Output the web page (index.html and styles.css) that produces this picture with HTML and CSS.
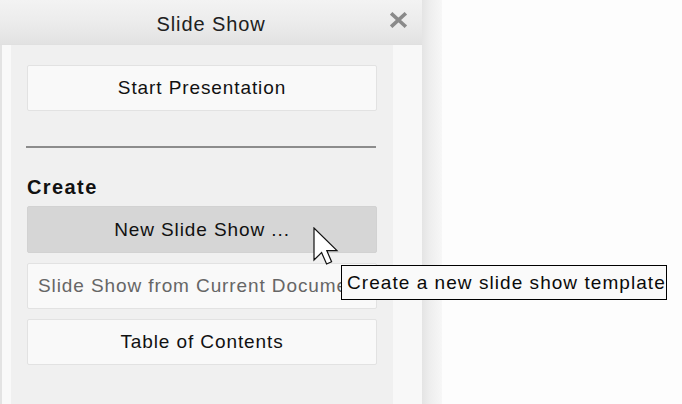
FILE: index.html
```html
<!DOCTYPE html>
<html>
<head>
<meta charset="utf-8">
<link rel="stylesheet" href="styles.css">
</head>
<body>
<div class="app">
  <aside class="panel">
    <header class="panel-header">
      <span class="title">Slide Show</span>
      <span class="close" aria-label="Close">
        <svg width="17" height="16" viewBox="0 0 17 16"><path d="M2.5 2.5 L14.5 13.5 M14.5 2.5 L2.5 13.5" stroke="#8a8a8a" stroke-width="3.6" stroke-linecap="square"/></svg>
      </span>
    </header>
    <div class="panel-body">
      <div class="gutter"></div>
      <div class="content">
        <button class="btn">Start Presentation</button>
        <hr class="sep">
        <div class="label">Create</div>
        <div class="btn-list">
          <button class="btn btn-hover">New Slide Show ...</button>
          <button class="btn btn-muted"><span class="clip">Slide Show from Current Document</span></button>
          <button class="btn">Table of Contents</button>
        </div>
      </div>
      <div class="track"></div>
    </div>
  </aside>
  <div class="shadow"></div>
  <div class="desk"></div>
  <svg class="cursor" width="26" height="38" viewBox="0 0 13 19"><path d="M0.5 0.5 L0.5 16.5 L4.3 12.8 L6.8 18.5 L9.3 17.4 L6.9 11.8 L12 11.8 Z" fill="#fff" stroke="#111" stroke-width="0.6" stroke-linejoin="miter"/></svg>
  <div class="tooltip">Create a new slide show template</div>
</div>
</body>
</html>
```

FILE: styles.css
```css
* { box-sizing: border-box; }
html, body { margin: 0; padding: 0; }
body {
  width: 682px;
  height: 404px;
  overflow: hidden;
  background: #fdfdfd;
  font-family: "Liberation Sans", Arial, sans-serif;
}
.app {
  position: relative;
  display: flex;
  width: 682px;
  height: 404px;
}
.panel {
  width: 422px;
  height: 404px;
  display: flex;
  flex-direction: column;
  background: #f0f0f0;
}
.panel-header {
  height: 45px;
  flex: none;
  display: grid;
  grid-template-columns: 1fr auto 1fr;
  align-items: center;
  background: linear-gradient(#f3f3f3 0%, #ececec 50%, #e2e2e2 100%);
  border-bottom: 1px solid #e0e0e0;
}
.title {
  grid-column: 2;
  font-size: 20px;
  letter-spacing: 0.9px;
  color: #202020;
  padding-top: 5px;
}
.close {
  grid-column: 3;
  justify-self: end;
  margin-right: 15px;
  margin-bottom: 5px;
  display: flex;
}
.panel-body {
  flex: 1;
  display: flex;
  border-left: 2px solid #e3e3e3;
}
.gutter {
  width: 9px;
  background: #f9f9f9;
}
.content {
  flex: 1;
  background: #f0f0f0;
  padding: 20px 16px 0 16px;
}
.track {
  width: 29px;
  background: #f8f8f8;
}
.btn {
  display: flex;
  align-items: center;
  justify-content: center;
  width: 100%;
  height: 46px;
  margin: 0;
  padding: 0 10px;
  background: #f9f9f9;
  border: 1px solid #e2e2e2;
  border-radius: 2px;
  font-family: "Liberation Sans", Arial, sans-serif;
  font-size: 19px;
  letter-spacing: 0.9px;
  color: #111;
}
.btn-hover {
  background: #d6d6d6;
  border-color: #d2d2d2;
  height: 47px;
}
.btn-muted {
  justify-content: flex-start;
  color: #666;
  overflow: hidden;
}
.clip {
  white-space: nowrap;
}
.sep {
  margin: 35px 1px 0 -1px;
  height: 2px;
  border: none;
  background: #8c8c8c;
}
.label {
  margin-top: 27px;
  line-height: 24px;
  height: 24px;
  font-size: 20px;
  font-weight: bold;
  letter-spacing: 1.4px;
  color: #111;
}
.btn-list {
  margin-top: 7px;
  display: flex;
  flex-direction: column;
  gap: 10px;
}
.shadow {
  width: 20px;
  height: 404px;
  background: linear-gradient(90deg, #e4e4e4, #eeeeee 40%, #f7f7f7 100%);
}
.desk {
  flex: 1;
  background: #fdfdfd;
}
.cursor {
  position: absolute;
  left: 313px;
  top: 227px;
}
.tooltip {
  position: absolute;
  left: 341px;
  top: 265px;
  width: 326px;
  height: 35px;
  padding: 0 0 0 5px;
  display: flex;
  align-items: center;
  background: #fafafa;
  border: 1px solid #000;
  font-size: 19px;
  letter-spacing: 1.05px;
  color: #0a0a0a;
  white-space: nowrap;
}
```
